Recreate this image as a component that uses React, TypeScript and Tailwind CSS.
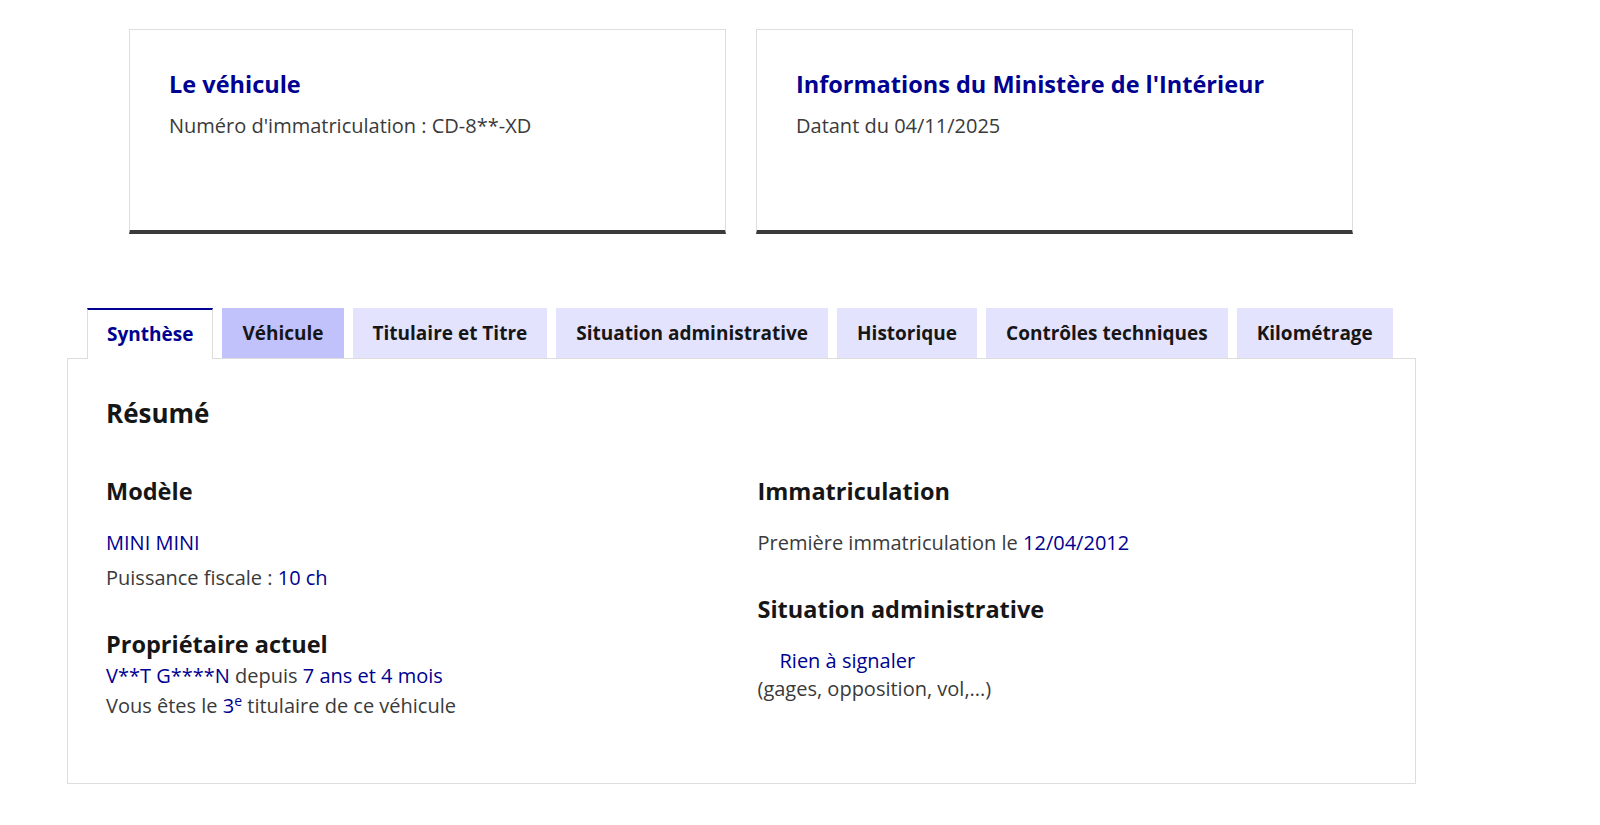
import React from 'react'

const font = { fontFamily: '"Open Sans", "Liberation Sans", sans-serif' }

const tabs = [
  'Synthèse',
  'Véhicule',
  'Titulaire et Titre',
  'Situation administrative',
  'Historique',
  'Contrôles techniques',
  'Kilométrage',
]

function InfoCard({ title, text }: { title: string; text: string }) {
  return (
    <div className="w-[597px] h-[205px] bg-white border border-[#dddddd] border-b-4 border-b-[#3a3a3a] px-[39px] pt-[38px]">
      <h2 className="text-[23.5px] font-bold text-[#000091] leading-[32px]">{title}</h2>
      <p className="mt-[12px] text-[20px] text-[#3a3a3a] leading-[28px]">{text}</p>
    </div>
  )
}

export default function App() {
  return (
    <div className="min-h-screen bg-white text-[#3a3a3a]" style={font}>
      <div className="flex gap-[30px] pl-[129px] pt-[29px]">
        <InfoCard title="Le véhicule" text="Numéro d'immatriculation : CD-8**-XD" />
        <InfoCard title="Informations du Ministère de l'Intérieur" text="Datant du 04/11/2025" />
      </div>

      <div className="ml-[67px] mt-[74px] w-[1349px]">
        <div className="flex gap-[9px] pl-[20px]">
          {tabs.map((t, i) => (
            <div
              key={t}
              className={
                i === 0
                  ? 'h-[51px] px-[19px] flex items-center bg-white border-t-2 border-t-[#000091] border-x border-x-[#dddddd] text-[#000091] text-[19px] font-bold -mb-px relative z-10'
                  : i === 1
                    ? 'h-[50px] px-[20px] flex items-center bg-[#c1c1fb] text-[#161616] text-[19px] font-bold'
                    : 'h-[50px] px-[20px] flex items-center bg-[#e3e3fd] text-[#161616] text-[19px] font-bold'
              }
            >
              {t}
            </div>
          ))}
        </div>
        <div className="border border-[#dddddd] h-[426px] px-[38px] pt-[36px]">
          <h2 className="text-[26px] font-bold text-[#161616] leading-[36px]">Résumé</h2>
          <div className="grid grid-cols-2 gap-x-[32px] mt-[44px]">
            <div>
              <h3 className="text-[23.5px] font-bold text-[#161616] leading-[32px]">Modèle</h3>
              <p className="mt-[22px] text-[20px] leading-[28px] text-[#000091]">MINI MINI</p>
              <p className="mt-[7px] text-[20px] leading-[28px]">
                Puissance fiscale : <span className="text-[#000091]">10 ch</span>
              </p>
              <h3 className="mt-[36px] text-[23.5px] font-bold text-[#161616] leading-[32px]">Propriétaire actuel</h3>
              <p className="mt-px text-[20px] leading-[30px]">
                <span className="text-[#000091]">V**T G****N</span> depuis{' '}
                <span className="text-[#000091]">7 ans et 4 mois</span>
              </p>
              <p className="text-[20px] leading-[30px]">
                Vous êtes le <span className="text-[#000091]">3<sup className="text-[14px]">e</sup></span> titulaire de ce véhicule
              </p>
            </div>
            <div>
              <h3 className="text-[23.5px] font-bold text-[#161616] leading-[32px]">Immatriculation</h3>
              <p className="mt-[22px] text-[20px] leading-[28px]">
                Première immatriculation le <span className="text-[#000091]">12/04/2012</span>
              </p>
              <h3 className="mt-[36px] text-[23.5px] font-bold text-[#161616] leading-[32px]">Situation administrative</h3>
              <p className="mt-[22px] pl-[22px] text-[20px] leading-[28px] text-[#000091]">Rien à signaler</p>
              <p className="text-[20px] leading-[28px]">(gages, opposition, vol,...)</p>
            </div>
          </div>
        </div>
      </div>
    </div>
  )
}
